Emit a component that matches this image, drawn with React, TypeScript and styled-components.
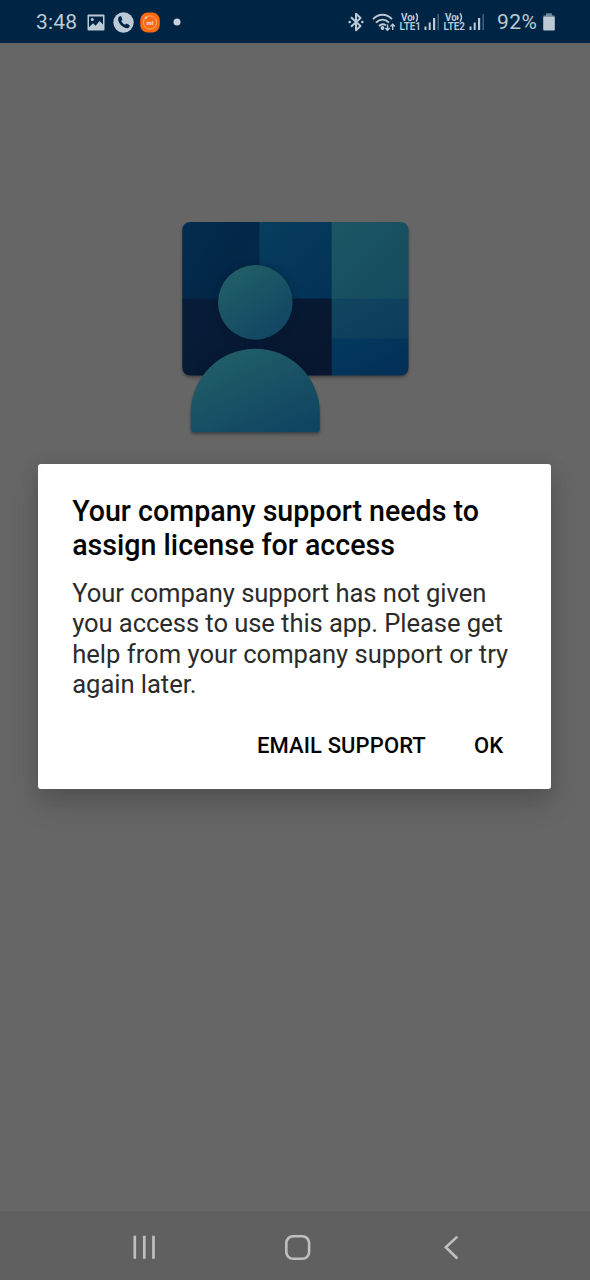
import React from 'react';
import styled, { createGlobalStyle } from 'styled-components';

const GlobalStyle = createGlobalStyle`
  *, *::before, *::after { box-sizing: border-box; }
  html, body { margin: 0; padding: 0; background: #666666; }
  body { font-family: Roboto, "Liberation Sans", sans-serif; }
  svg { display: block; flex: none; }
`;

const Screen = styled.div`
  width: 590px;
  height: 1280px;
  display: flex;
  flex-direction: column;
  background: #666666;
  overflow: hidden;
`;

const StatusBar = styled.header`
  height: 43px;
  flex: none;
  display: flex;
  justify-content: space-between;
  background: #002544;
  color: #bccad6;
`;

const StatusGroup = styled.div`
  display: flex;
  align-items: center;
  height: 44px;
`;

const StatusText = styled.span<{ $width: number; $tracking: number }>`
  width: ${(p) => p.$width}px;
  font-size: 21px;
  line-height: 24px;
  letter-spacing: ${(p) => p.$tracking}px;
  white-space: nowrap;
`;

const Spacer = styled.span<{ $w: number }>`
  width: ${(p) => p.$w}px;
  flex: none;
`;

const Content = styled.main`
  flex: 1;
  display: flex;
  flex-direction: column;
`;

const LogoArea = styled.div`
  height: 421px;
  flex: none;
  display: flex;
  justify-content: center;
  padding-top: 162px;
`;

const Dialog = styled.section`
  width: 513.600px;
  height: 325.300px;
  flex: none;
  margin: 0 0 0 37.600px;
  padding: 31px 24px 0 34.600px;
  display: flex;
  flex-direction: column;
  background: #ffffff;
  border-radius: 3px;
  box-shadow: 0 15px 28px rgba(0, 0, 0, 0.17), 0 2px 20px rgba(0, 0, 0, 0.08);
`;

const Title = styled.h1`
  margin: 0;
  font-size: 28.600px;
  font-weight: 500;
  line-height: 33.600px;
  color: #050505;
`;

const Message = styled.p`
  margin: 15.800px 0 0;
  font-size: 25.600px;
  line-height: 30.300px;
  color: #2b2b2b;
`;

const Line = styled.span<{ $tracking?: number }>`
  display: block;
  white-space: nowrap;
  letter-spacing: ${(p) => p.$tracking ?? 0}px;
`;

const Actions = styled.div`
  display: flex;
  justify-content: flex-end;
  gap: 48px;
  margin-top: 32px;
  padding-right: 24px;
`;

const ActionButton = styled.button`
  border: 0;
  padding: 0;
  background: none;
  font: 500 22px/30px Roboto, "Liberation Sans", sans-serif;
  letter-spacing: 0.110px;
  color: #050505;
  white-space: nowrap;
`;

const NavBar = styled.nav`
  height: 69px;
  flex: none;
  display: flex;
  align-items: center;
  gap: 126px;
  padding: 3px 0 0 130px;
  background: #606060;
`;

const PictureIcon = () => (
  <svg width="18" height="17" viewBox="0 0 18 17">
    <path
      fill="currentColor"
      fillRule="evenodd"
      d="M1.500 0.500h15a1 1 0 0 1 1 1v14a1 1 0 0 1-1 1h-15a1 1 0 0 1-1-1v-14a1 1 0 0 1 1-1zM2 2.500v10.700l4-4 2.600 2.500 4-4.700L16 10.500V2.500z"
    />
    <circle cx="5.300" cy="5.500" r="1.500" fill="currentColor" />
  </svg>
);

const CallIcon = () => (
  <svg width="21" height="21" viewBox="0 0 21 21">
    <circle cx="10.500" cy="10.500" r="10.200" fill="currentColor" />
    <path
      fill="#002544"
      d="M6.300 4.600 8 4.100 9.500 7.600 8.300 9c.8 1.700 2 3 3.700 3.800l1.500-1.200 3.200 1.600c.2 1.600-.8 2.800-2.400 3-4.600-.1-9.100-4.800-9.200-8.900 0-1.200.4-2 1.200-2.700z"
    />
  </svg>
);

const MiIcon = () => (
  <svg width="20" height="21" viewBox="0 0 20 21">
    <rect x="0.200" y="0.500" width="19.600" height="20" rx="7.500" fill="#f96a12" />
    <circle cx="10" cy="10.500" r="6.600" fill="none" stroke="#ffb483" strokeWidth="0.800" />
    <circle cx="6" cy="5.600" r="1.200" fill="#ffd9bd" />
    <text x="10" y="12.600" fontSize="6" fontWeight="700" textAnchor="middle" fill="#ffe8d8">mi</text>
  </svg>
);

const DotIcon = () => (
  <svg width="8" height="8" viewBox="0 0 8 8">
    <circle cx="4" cy="4" r="3.500" fill="#c9d3dc" />
  </svg>
);

const BluetoothIcon = () => (
  <svg width="16" height="20" viewBox="0 0 16 20" fill="none" stroke="currentColor" strokeWidth="2">
    <path d="M3 5.300 12.500 14 8 18.200V1.800L12.500 6 3 14.700" strokeLinejoin="round" />
    <circle cx="1.700" cy="10" r="1.300" fill="currentColor" stroke="none" />
    <circle cx="14.300" cy="10" r="1.300" fill="currentColor" stroke="none" />
  </svg>
);

const WifiIcon = () => (
  <svg width="24" height="19" viewBox="0 0 24 19" fill="none" stroke="currentColor" strokeWidth="1.900">
    <path d="M1 6.200C6.500.3 14.500.3 20 6.200M4 9.700c4-4.100 9-4.100 13 0M7 13c2.200-2.200 4.600-2.300 7-.8" />
    <circle cx="10.500" cy="15" r="1.900" fill="currentColor" stroke="none" />
    <path d="M15.500 11.500v5.500M13.300 15l2.200 2.300 2.200-2.300M20.700 17v-5.500M18.500 13.500l2.200-2.300 2.200 2.300" strokeWidth="1.400" />
  </svg>
);

const LteIcon = ({ sim }: { sim: number }) => (
  <svg width="23" height="22" viewBox="0 0 23 22" fill="currentColor" fontFamily="Roboto, sans-serif" fontWeight="700">
    <text x="2" y="9.600" fontSize="10" textLength="11.800" lengthAdjust="spacingAndGlyphs">Vo</text>
    <path d="M14.300 4.300q1.200 2.300 0 4.600M17 2.300q3 4.200 0 8.300" fill="none" stroke="currentColor" strokeWidth="1.500" />
    <text x="0.500" y="19.300" fontSize="10.500" fontWeight="600" textLength="21.500" lengthAdjust="spacingAndGlyphs">{`LTE${sim}`}</text>
  </svg>
);

const SignalIcon = () => (
  <svg width="16" height="18" viewBox="0 0 16 18" fill="currentColor">
    <rect x="0.500" y="13.500" width="2" height="3.500" />
    <rect x="4.700" y="9.500" width="2" height="7.500" />
    <rect x="9" y="5" width="2.200" height="12" />
    <rect x="13.500" y="1" width="1.400" height="16" opacity="0.400" />
  </svg>
);

const BatteryIcon = () => (
  <svg width="12" height="18" viewBox="0 0 12 18">
    <rect x="3" y="0.300" width="6" height="3" rx="0.800" fill="#6f8496" />
    <rect x="0.200" y="2.500" width="11.600" height="2.500" rx="1" fill="#8294a4" />
    <rect x="0.200" y="4" width="11.600" height="13.500" rx="1.200" fill="currentColor" />
  </svg>
);

const Logo = () => (
  <svg width="260" height="245" viewBox="165 205 260 245">
    <defs>
      <linearGradient id="navy" x1="0" y1="0" x2="1" y2="0.600">
        <stop offset="0" stopColor="#022c50" />
        <stop offset="0.600" stopColor="#032747" />
        <stop offset="1" stopColor="#03284a" />
      </linearGradient>
      <linearGradient id="blue" x1="0" y1="0" x2="1" y2="1">
        <stop offset="0" stopColor="#083e5d" />
        <stop offset="1" stopColor="#023157" />
      </linearGradient>
      <linearGradient id="teal" x1="0" y1="0" x2="1" y2="1">
        <stop offset="0" stopColor="#1c5664" />
        <stop offset="1" stopColor="#144b5f" />
      </linearGradient>
      <linearGradient id="steel" x1="0" y1="0" x2="1" y2="1">
        <stop offset="0" stopColor="#11465f" />
        <stop offset="1" stopColor="#0a3c5d" />
      </linearGradient>
      <linearGradient id="deep" x1="0" y1="0" x2="1" y2="1">
        <stop offset="0" stopColor="#03395f" />
        <stop offset="1" stopColor="#022e55" />
      </linearGradient>
      <linearGradient id="ink" x1="0" y1="0" x2="1" y2="0.500">
        <stop offset="0" stopColor="#061d3a" />
        <stop offset="1" stopColor="#08172f" />
      </linearGradient>
      <linearGradient id="person" x1="0.150" y1="0" x2="0.850" y2="1">
        <stop offset="0" stopColor="#236067" />
        <stop offset="1" stopColor="#0f4462" />
      </linearGradient>
      <clipPath id="card">
        <rect x="182.300" y="222" width="226.200" height="153.500" rx="8" />
      </clipPath>
      <filter id="drop" x="-20%" y="-20%" width="140%" height="140%" colorInterpolationFilters="sRGB">
        <feDropShadow dx="0" dy="2" stdDeviation="1.800" floodColor="#000" floodOpacity="0.350" />
      </filter>
      <filter id="glow" x="-30%" y="-30%" width="160%" height="160%" colorInterpolationFilters="sRGB">
        <feGaussianBlur stdDeviation="5" />
      </filter>
    </defs>
    <g filter="url(#drop)">
      <g clipPath="url(#card)">
        <rect x="182" y="221" width="78" height="78" fill="url(#navy)" />
        <rect x="259.500" y="221" width="73" height="78" fill="url(#blue)" />
        <rect x="182" y="298.500" width="150" height="78" fill="url(#ink)" />
        <rect x="331.700" y="221" width="78" height="78" fill="url(#teal)" />
        <rect x="331.700" y="298.500" width="78" height="40" fill="url(#steel)" />
        <rect x="331.700" y="338.200" width="78" height="39" fill="url(#deep)" />
        <g filter="url(#glow)" fill="#06152c" opacity="0.450">
          <circle cx="255.300" cy="304" r="38" />
          <circle cx="255.300" cy="414" r="65" />
        </g>
      </g>
    </g>
    <circle cx="255.300" cy="302.400" r="37.300" fill="url(#person)" />
    <path
      d="M190.800 413a64.500 64.300 0 0 1 129 0v16q0 3.200-3.200 3.200H194q-3.200 0-3.200-3.200z"
      fill="url(#person)"
      filter="url(#drop)"
    />
  </svg>
);

const RecentsIcon = () => (
  <svg width="28" height="28" viewBox="0 0 28 28" stroke="#bfbfbf" strokeWidth="2.700">
    <path d="M4.800 2.800v23M14.300 2.800v23M23.500 2.800v23" />
  </svg>
);

const HomeIcon = () => (
  <svg width="28" height="28" viewBox="0 0 28 28" fill="none" stroke="#bfbfbf" strokeWidth="2.600">
    <rect x="2.300" y="3.300" width="22.800" height="22.500" rx="6.800" />
  </svg>
);

const BackIcon = () => (
  <svg width="28" height="28" viewBox="0 0 28 28" fill="none" stroke="#bfbfbf" strokeWidth="2.600">
    <path d="M19.300 3.600 7.800 14.300l11.500 11.200" />
  </svg>
);

export default function App() {
  return (
    <>
      <GlobalStyle />
      <Screen>
        <StatusBar>
          <StatusGroup>
            <Spacer $w={36} />
            <StatusText $width={51} $tracking={0.2}>3:48</StatusText>
            <PictureIcon />
            <Spacer $w={8} />
            <CallIcon />
            <Spacer $w={6} />
            <MiIcon />
            <Spacer $w={13} />
            <DotIcon />
          </StatusGroup>
          <StatusGroup>
            <BluetoothIcon />
            <Spacer $w={8} />
            <WifiIcon />
            <Spacer $w={3} />
            <LteIcon sim={1} />
            <Spacer $w={2} />
            <SignalIcon />
            <Spacer $w={3} />
            <LteIcon sim={2} />
            <Spacer $w={3} />
            <SignalIcon />
            <Spacer $w={12} />
            <StatusText $width={46} $tracking={0.4}>92%</StatusText>
            <BatteryIcon />
            <Spacer $w={35} />
          </StatusGroup>
        </StatusBar>
        <Content>
          <LogoArea>
            <Logo />
          </LogoArea>
          <Dialog role="dialog">
            <Title>
              <Line>Your company support needs to</Line>
              <Line>assign license for access</Line>
            </Title>
            <Message>
              <Line $tracking={-0.05}>Your company support has not given</Line>
              <Line $tracking={-0.08}>you access to use this app. Please get</Line>
              <Line>help from your company support or try</Line>
              <Line $tracking={-0.05}>again later.</Line>
            </Message>
            <Actions>
              <ActionButton>EMAIL SUPPORT</ActionButton>
              <ActionButton>OK</ActionButton>
            </Actions>
          </Dialog>
        </Content>
        <NavBar>
          <RecentsIcon />
          <HomeIcon />
          <BackIcon />
        </NavBar>
      </Screen>
    </>
  );
}
